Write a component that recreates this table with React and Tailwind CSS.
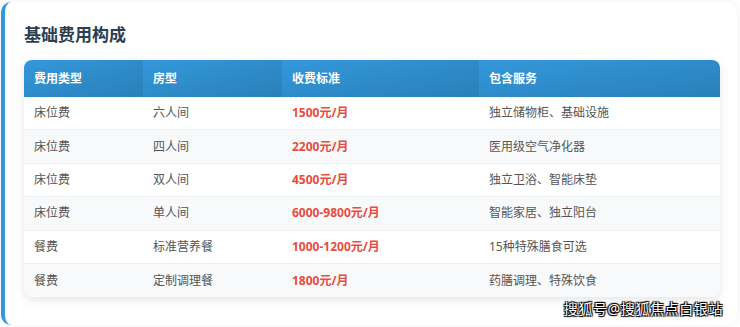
import React from "react";

const rows = [
  ["床位费", "六人间", "1500元/月", "独立储物柜、基础设施"],
  ["床位费", "四人间", "2200元/月", "医用级空气净化器"],
  ["床位费", "双人间", "4500元/月", "独立卫浴、智能床垫"],
  ["床位费", "单人间", "6000-9800元/月", "智能家居、独立阳台"],
  ["餐费", "标准营养餐", "1000-1200元/月", "15种特殊膳食可选"],
  ["餐费", "定制调理餐", "1800元/月", "药膳调理、特殊饮食"],
];

const headers = ["费用类型", "房型", "收费标准", "包含服务"];
const widths = ["w-[119px]", "w-[139px]", "w-[197px]", "w-[241px]"];

export default function App() {
  return (
    <div
      className="w-[740px] h-[327px] bg-white pl-[1px] pt-[2px] overflow-hidden"
      style={{ fontFamily: '"Noto Sans", "Noto Sans CJK SC", sans-serif' }}
    >
      <div className="relative w-[736px] h-[323px] bg-white rounded-[10px] border-l-4 border-[#3498db] shadow-[0_0_8px_rgba(0,0,0,0.06)] pl-[19px] pt-[20px]">
        <h2 className="text-[17px] leading-[26px] font-bold text-[#2c3e50]">基础费用构成</h2>
        <div className="mt-[12px] w-[696px] rounded-[8px] overflow-hidden shadow-[0_3px_10px_rgba(0,0,0,0.1)]">
          <div className="flex h-[37px]">
            {headers.map((h, i) => (
              <div
                key={h}
                className={`${widths[i]} flex items-center pl-[10px] text-[12px] font-bold text-white bg-gradient-to-br from-[#3498db] to-[#2980b9]`}
              >
                {h}
              </div>
            ))}
          </div>
          {rows.map((r, ri) => (
            <div
              key={ri}
              className={`flex h-[33.4px] items-center text-[12px] border-b border-[#ecf0f1] last:border-b-0 ${ri % 2 === 1 ? "bg-[#f8f9fa]" : "bg-white"}`}
            >
              <div className="w-[119px] pl-[10px] text-[#555]">{r[0]}</div>
              <div className="w-[139px] pl-[10px] text-[#555]">{r[1]}</div>
              <div className="w-[197px] pl-[10px] font-bold text-[#e74c3c]">{r[2]}</div>
              <div className="w-[241px] pl-[10px] text-[#555]">{r[3]}</div>
            </div>
          ))}
        </div>
        <div
          className="absolute right-[14px] bottom-[6px] text-[14px] leading-[20px] text-white tracking-[0.6px]"
          style={{ textShadow: "0 0 1px #000, 1px 1px 1px #000, -1px -1px 1px #000, 1px -1px 1px #000, -1px 1px 1px #000" }}
        >
          搜狐号@搜狐焦点白银站
        </div>
      </div>
    </div>
  );
}
